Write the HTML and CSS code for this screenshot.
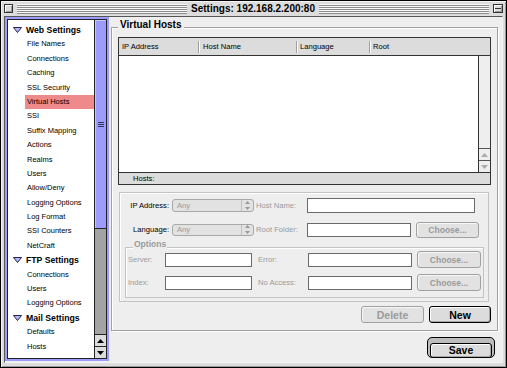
FILE: index.html
```html
<!DOCTYPE html>
<html lang="en">

<head>
    <meta charset="UTF-8">
    <title>Settings: 192.168.2.200:80</title>
    <link rel="stylesheet" href="styles.css">
</head>

<body>
    <div class="window">
        <div class="titlebar">
            <span class="close-box"></span>
            <span class="stripes"></span>
            <span class="title">Settings: 192.168.2.200:80</span>
            <span class="stripes"></span>
            <span class="shade-box"></span>
        </div>

        <div class="frame">
            <!-- left tree list -->
            <div class="sidebar">
                <div class="sidebar-inner">
                    <ul class="tree">
                        <li class="tree-head"><svg class="twist" width="9" height="6" viewBox="0 0 9 6"><polygon points="0.5,0.5 8.5,0.5 4.5,5.5" fill="#b8b8ff" stroke="#222244" stroke-width="1"/></svg>Web Settings</li>
                        <li class="tree-item">File Names</li>
                        <li class="tree-item">Connections</li>
                        <li class="tree-item">Caching</li>
                        <li class="tree-item">SSL Security</li>
                        <li class="tree-item selected">Virtual Hosts</li>
                        <li class="tree-item">SSI</li>
                        <li class="tree-item">Suffix Mapping</li>
                        <li class="tree-item">Actions</li>
                        <li class="tree-item">Realms</li>
                        <li class="tree-item">Users</li>
                        <li class="tree-item">Allow/Deny</li>
                        <li class="tree-item">Logging Options</li>
                        <li class="tree-item">Log Format</li>
                        <li class="tree-item">SSI Counters</li>
                        <li class="tree-item">NetCraft</li>
                        <li class="tree-head"><svg class="twist" width="9" height="6" viewBox="0 0 9 6"><polygon points="0.5,0.5 8.5,0.5 4.5,5.5" fill="#b8b8ff" stroke="#222244" stroke-width="1"/></svg>FTP Settings</li>
                        <li class="tree-item">Connections</li>
                        <li class="tree-item">Users</li>
                        <li class="tree-item">Logging Options</li>
                        <li class="tree-head"><svg class="twist" width="9" height="6" viewBox="0 0 9 6"><polygon points="0.5,0.5 8.5,0.5 4.5,5.5" fill="#b8b8ff" stroke="#222244" stroke-width="1"/></svg>Mail Settings</li>
                        <li class="tree-item">Defaults</li>
                        <li class="tree-item">Hosts</li>
                    </ul>
                    <div class="vscroll">
                        <div class="thumb">
                            <svg width="6" height="5" viewBox="0 0 6 5"><path d="M0 0.5H6M0 2.5H6M0 4.5H6" stroke="#333366" stroke-width="1"/></svg>
                        </div>
                        <div class="track"></div>
                        <div class="arrow"><svg width="7" height="4" viewBox="0 0 7 4"><polygon points="3.5,0 7,4 0,4" fill="#000"/></svg></div>
                        <div class="arrow"><svg width="7" height="4" viewBox="0 0 7 4"><polygon points="0,0 7,0 3.5,4" fill="#000"/></svg></div>
                    </div>
                </div>
            </div>

            <div class="main">
                <div class="group">
                    <div class="group-title">Virtual Hosts</div>

                    <div class="list">
                        <div class="list-head">
                            <div class="col col-ip">IP Address</div>
                            <span class="sep"></span>
                            <div class="col col-host">Host Name</div>
                            <span class="sep"></span>
                            <div class="col col-lang">Language</div>
                            <span class="sep"></span>
                            <div class="col col-root">Root</div>
                        </div>
                        <div class="list-body">
                            <div class="list-rows"></div>
                            <div class="list-scroll">
                                <div class="list-track"></div>
                                <div class="list-arrow"><svg width="7" height="4" viewBox="0 0 7 4"><polygon points="3.5,0 7,4 0,4" fill="#aaa"/></svg></div>
                                <div class="list-arrow"><svg width="7" height="4" viewBox="0 0 7 4"><polygon points="0,0 7,0 3.5,4" fill="#aaa"/></svg></div>
                            </div>
                        </div>
                        <div class="list-foot">Hosts:</div>
                    </div>

                    <div class="edit">
                        <div class="row row-1">
                            <label class="lbl-r">IP Address:</label>
                            <div class="popup"><span class="pop-val">Any</span><span class="pop-arrow"><svg width="5" height="9" viewBox="0 0 5 9"><polygon points="2.5,0 5,3 0,3" fill="#999"/><polygon points="0,6 5,6 2.5,9" fill="#999"/></svg></span></div>
                            <label class="lbl off">Host Name:</label>
                            <span class="field wide"></span>
                        </div>
                        <div class="row row-2">
                            <label class="lbl-r">Language:</label>
                            <div class="popup"><span class="pop-val">Any</span><span class="pop-arrow"><svg width="5" height="9" viewBox="0 0 5 9"><polygon points="2.5,0 5,3 0,3" fill="#999"/><polygon points="0,6 5,6 2.5,9" fill="#999"/></svg></span></div>
                            <label class="lbl off">Root Folder:</label>
                            <span class="field"></span>
                            <button class="btn choose" disabled>Choose...</button>
                        </div>

                        <div class="options">
                            <div class="options-title">Options</div>
                            <div class="row opt-row">
                                <label class="lbl-s off">Server:</label>
                                <span class="field short"></span>
                                <label class="lbl-m off">Error:</label>
                                <span class="field"></span>
                                <button class="btn choose wide-choose" disabled>Choose...</button>
                            </div>
                            <div class="row opt-row second">
                                <label class="lbl-s off">Index:</label>
                                <span class="field short"></span>
                                <label class="lbl-m off">No Access:</label>
                                <span class="field"></span>
                                <button class="btn choose wide-choose" disabled>Choose...</button>
                            </div>
                        </div>
                    </div>

                    <div class="actions">
                        <button class="btn push delete" disabled>Delete</button>
                        <button class="btn push new">New</button>
                    </div>
                </div>

                <div class="save-ring">
                    <button class="btn save">Save</button>
                </div>
            </div>
        </div>
    </div>
</body>

</html>
```

FILE: styles.css
```css
* {
    box-sizing: border-box;
}

body {
    margin: 0;
    background-color: #ffffff;
    font-family: "Liberation Sans", Arial, sans-serif;
    color: #000;
}

.window {
    width: 507px;
    height: 368px;
    border: 1px solid #000;
    background-color: #dcdcdc;
    box-shadow: inset 1px 1px 0 #f4f4f4, inset -1px -1px 0 #9a9a9a;
    display: flex;
    flex-direction: column;
}

/* title bar */
.titlebar {
    height: 15px;
    display: flex;
    align-items: center;
    padding: 0 3px;
}

.close-box,
.shade-box {
    width: 9px;
    height: 9px;
    border: 1px solid #333;
    background-color: #dcdcdc;
    box-shadow: inset 1px 1px 0 #fff, inset -1px -1px 0 #999;
}

.shade-box {
    background: linear-gradient(#dcdcdc 3px, #333 3px, #333 4px, #dcdcdc 4px);
    width: 10px;
}

.stripes {
    flex: 1;
    height: 10px;
    margin: 0 4px;
    background: repeating-linear-gradient(to bottom, #f8f8f8 0, #f8f8f8 1px, #8c8c8c 1px, #8c8c8c 2px);
}

.title {
    font-size: 10px;
    font-weight: bold;
    line-height: 12px;
}

/* window body */
.frame {
    flex: 1;
    margin: 0 3px 4px 3px;
    border: 1px solid #555;
    border-right-color: #f4f4f4;
    border-bottom-color: #f4f4f4;
    background-color: #eeeeee;
    display: flex;
}

.sidebar {
    width: 104px;
    margin-bottom: 1px;
    border: 2px solid #9c9cff;
}

.sidebar-inner {
    height: 100%;
    border: 1px solid #222;
    display: flex;
}

.tree {
    flex: 1;
    margin: 0;
    padding: 3px 0 0 0;
    list-style: none;
    background-color: #fff;
    overflow: hidden;
}

.tree li {
    height: 14.4px;
    line-height: 14.4px;
    white-space: nowrap;
}

.tree-head {
    font-size: 8.7px;
    font-weight: bold;
    padding-left: 5px;
    display: flex;
    align-items: center;
}

.twist {
    margin-right: 4px;
}

.tree-item {
    font-size: 7.5px;
    margin-left: 17px;
    padding-left: 2px;
}

.selected {
    background-color: #ef8a8a;
}

.vscroll {
    width: 12px;
    border-left: 1px solid #222;
    display: flex;
    flex-direction: column;
}

.thumb {
    height: 209px;
    background-color: #9c9cff;
    border-bottom: 1px solid #222;
    box-shadow: inset 1px 1px 0 #c4c4ff;
    display: flex;
    align-items: center;
    justify-content: center;
}

.track {
    flex: 1;
    background-color: #a3a3a3;
}

.arrow {
    height: 12px;
    border-top: 1px solid #222;
    background-color: #dcdcdc;
    display: flex;
    align-items: center;
    justify-content: center;
}

/* right side */
.main {
    flex: 1;
    padding: 10px 4px 0 2px;
    display: flex;
    flex-direction: column;
}

.group {
    border: 1px solid #a0a0a0;
    box-shadow: 1px 1px 0 #fff, inset 1px 1px 0 #fff;
    padding: 0 6px 7px 6px;
}

.group-title {
    width: fit-content;
    margin-top: -9px;
    padding: 0 2px;
    font-size: 10px;
    font-weight: bold;
    line-height: 11px;
    background-color: #eeeeee;
}

.list {
    margin-top: 7px;
    border: 1px solid #333;
    font-size: 7.6px;
}

.list-head {
    height: 18px;
    background-color: #dcdcdc;
    border-bottom: 1px solid #333;
    display: flex;
    align-items: center;
}

.col {
    padding-left: 3px;
}

.col-ip {
    width: 79px;
}

.col-host {
    width: 96px;
}

.col-lang {
    width: 71px;
    padding-left: 2px;
}

.col-root {
    flex: 1;
    padding-left: 2px;
}

.sep {
    width: 2px;
    height: 12px;
    background: linear-gradient(to right, #a0a0a0 1px, #fff 1px);
}

.list-body {
    height: 116px;
    display: flex;
}

.list-rows {
    flex: 1;
    background-color: #fff;
}

.list-scroll {
    width: 12px;
    border-left: 1px solid #333;
    background-color: #eeeeee;
    display: flex;
    flex-direction: column;
}

.list-track {
    flex: 1;
}

.list-arrow {
    height: 12px;
    border-top: 1px solid #555;
    display: flex;
    align-items: center;
    justify-content: center;
}

.list-foot {
    height: 12px;
    border-top: 1px solid #333;
    background-color: #dcdcdc;
    padding-left: 14px;
    line-height: 11px;
}

/* edit area */
.edit {
    margin: 7px 2px 0 1px;
    border: 1px solid #c4c4c4;
    box-shadow: inset 1px 1px 0 #fff;
    padding: 5px 0 3px 0;
    font-size: 7.6px;
}

.row {
    display: flex;
    align-items: center;
}

.row-1 {
    height: 15px;
}

.row-2 {
    height: 17px;
    margin-top: 8px;
}

.lbl-r {
    width: 50px;
    padding-right: 1px;
    text-align: right;
}

.lbl {
    width: 53px;
    padding-left: 2px;
}

.off {
    color: #9a9a9a;
}

.popup {
    width: 82px;
    height: 13px;
    margin-left: 2px;
    border: 1px solid #a8a8a8;
    border-radius: 3px;
    background-color: #e2e2e2;
    color: #9a9a9a;
    display: flex;
    align-items: center;
}

.row-2 .popup {
    height: 12px;
}

.pop-val {
    flex: 1;
    padding-left: 4px;
}

.pop-arrow {
    width: 12px;
    height: 100%;
    border-left: 1px solid #c0c0c0;
    display: flex;
    align-items: center;
    justify-content: center;
}

.field {
    width: 104px;
    height: 14px;
    border: 1px solid #6a6a6a;
    background-color: #fff;
}

.field.wide {
    width: 168px;
    height: 15px;
}

.field.short {
    width: 87px;
}

.btn {
    font-family: "Liberation Sans", Arial, sans-serif;
    font-weight: bold;
    padding: 0;
    border: 1px solid #000;
    border-radius: 3px;
    background-color: #dcdcdc;
    box-shadow: inset 1px 1px 0 #fff, inset -1px -1px 0 #a8a8a8;
    color: #000;
}

.btn:disabled {
    border-color: #a0a0a0;
    color: #9a9a9a;
    background-color: #e2e2e2;
    box-shadow: inset 1px 1px 0 #f6f6f6;
}

.choose {
    width: 63px;
    height: 16px;
    margin-left: 5px;
    font-size: 8.5px;
}

.wide-choose {
    width: 64px;
    height: 17px;
}

.options {
    margin: 9px 4px 0 5px;
    border: 1px solid #c4c4c4;
    box-shadow: inset 1px 1px 0 #fff;
    padding: 0 0 6px 1px;
}

.options-title {
    width: fit-content;
    margin: -9px 0 0 6px;
    padding: 0 1px;
    line-height: 10px;
    font-size: 8.5px;
    font-weight: bold;
    color: #9a9a9a;
    background-color: #eeeeee;
}

.opt-row {
    height: 17px;
    margin-top: 2px;
}

.opt-row.second {
    margin-top: 6px;
}

.lbl-s {
    width: 38px;
    padding-left: 1px;
}

.lbl-m {
    width: 56px;
    padding-left: 6px;
}

.actions {
    margin-top: 4px;
    display: flex;
    justify-content: flex-end;
    gap: 5px;
}

.push {
    height: 17px;
    font-size: 10.5px;
}

.delete {
    width: 63px;
}

.new {
    width: 62px;
}

.save-ring {
    align-self: flex-end;
    margin: 6px 3px 0 0;
    width: 68px;
    height: 21px;
    border: 1px solid #000;
    border-radius: 5px;
    background-color: #bdbdbd;
    padding: 2px;
}

.save {
    width: 100%;
    height: 100%;
    font-size: 10.5px;
}
```
